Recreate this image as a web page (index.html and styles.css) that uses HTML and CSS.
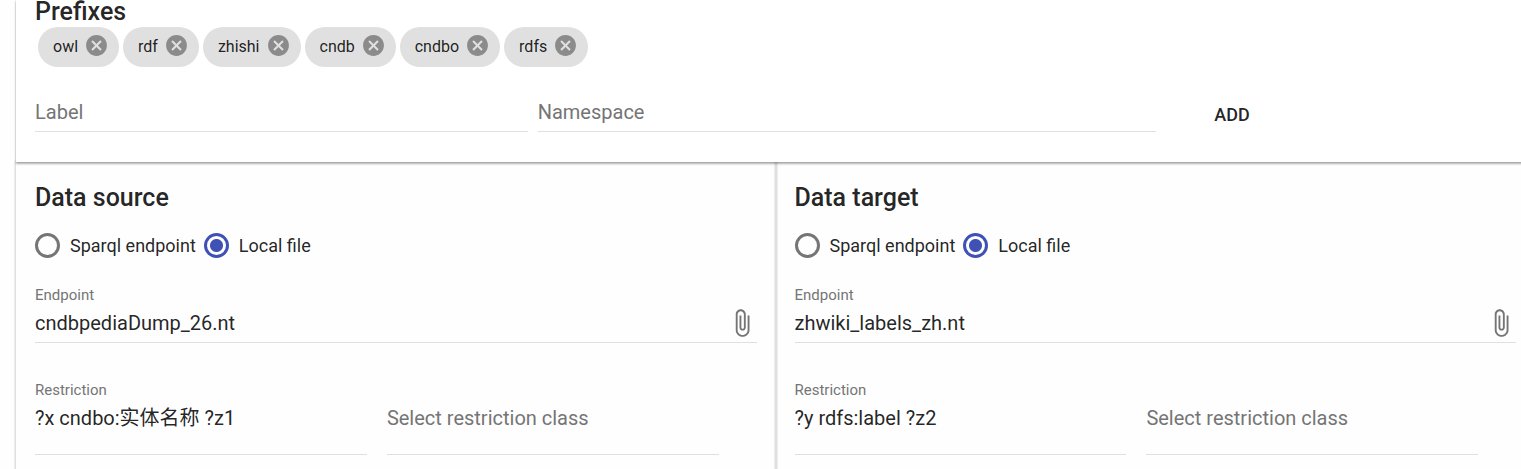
FILE: index.html
```
<!DOCTYPE html>
<html lang="en">
<head>
<meta charset="utf-8">
<title>Link configuration</title>
<link rel="stylesheet" href="styles.css">
</head>
<body>
<svg class="defs" aria-hidden="true">
  <symbol id="cancel" viewBox="0 0 24 24"><path d="M12 2C6.47 2 2 6.47 2 12s4.470 10 10 10 10-4.470 10-10S17.530 2 12 2zm5 13.590L15.590 17 12 13.410 8.410 17 7 15.590 10.590 12 7 8.410 8.410 7 12 10.590 15.590 7 17 8.410 13.410 12 17 15.590z"/></symbol>
  <symbol id="clip" viewBox="0 0 24 24"><path d="M16.500 6v11.500c0 2.210-1.790 4-4 4s-4-1.790-4-4V5c0-1.380 1.120-2.500 2.500-2.500s2.500 1.120 2.500 2.500v10.500c0 .550-.450 1-1 1s-1-.450-1-1V6H10v9.500c0 1.380 1.120 2.500 2.500 2.500s2.500-1.120 2.500-2.500V5c0-2.210-1.790-4-4-4S7 2.790 7 5v12.500c0 3.040 2.460 5.500 5.500 5.500s5.500-2.460 5.500-5.500V6h-1.500z"/></symbol>
</svg>
<main class="page">
  <section class="card prefixes">
    <h2 class="title">Prefixes</h2>
    <div class="chips">
      <span class="chip">owl<button class="remove" type="button" aria-label="Remove owl"><svg><use href="#cancel"/></svg></button></span>
      <span class="chip">rdf<button class="remove" type="button" aria-label="Remove rdf"><svg><use href="#cancel"/></svg></button></span>
      <span class="chip">zhishi<button class="remove" type="button" aria-label="Remove zhishi"><svg><use href="#cancel"/></svg></button></span>
      <span class="chip">cndb<button class="remove" type="button" aria-label="Remove cndb"><svg><use href="#cancel"/></svg></button></span>
      <span class="chip">cndbo<button class="remove" type="button" aria-label="Remove cndbo"><svg><use href="#cancel"/></svg></button></span>
      <span class="chip">rdfs<button class="remove" type="button" aria-label="Remove rdfs"><svg><use href="#cancel"/></svg></button></span>
    </div>
    <form class="add-form">
      <input class="text-input" type="text" placeholder="Label" aria-label="Label">
      <input class="text-input" type="text" placeholder="Namespace" aria-label="Namespace">
      <button class="add" type="button">ADD</button>
    </form>
  </section>
  <div class="columns">
    <section class="card dataset">
      <h2 class="title">Data source</h2>
      <div class="radios">
        <label class="option"><input class="radio" type="radio" name="source">Sparql endpoint</label>
        <label class="option"><input class="radio" type="radio" name="source" checked>Local file</label>
      </div>
      <div class="field">
        <label class="caption" for="source-endpoint">Endpoint</label>
        <div class="file-row">
          <input class="file-input" id="source-endpoint" type="text" value="cndbpediaDump_26.nt">
          <button class="attach" type="button" aria-label="Choose source file"><svg><use href="#clip"/></svg></button>
        </div>
      </div>
      <div class="restrictions">
        <div class="field">
          <label class="caption" for="source-restriction">Restriction</label>
          <textarea class="text-area" id="source-restriction">?x cndbo:实体名称 ?z1</textarea>
        </div>
        <textarea class="text-area" placeholder="Select restriction class" aria-label="Source restriction class"></textarea>
      </div>
    </section>
    <section class="card dataset">
      <h2 class="title">Data target</h2>
      <div class="radios">
        <label class="option"><input class="radio" type="radio" name="target">Sparql endpoint</label>
        <label class="option"><input class="radio" type="radio" name="target" checked>Local file</label>
      </div>
      <div class="field">
        <label class="caption" for="target-endpoint">Endpoint</label>
        <div class="file-row">
          <input class="file-input" id="target-endpoint" type="text" value="zhwiki_labels_zh.nt">
          <button class="attach" type="button" aria-label="Choose target file"><svg><use href="#clip"/></svg></button>
        </div>
      </div>
      <div class="restrictions">
        <div class="field">
          <label class="caption" for="target-restriction">Restriction</label>
          <textarea class="text-area" id="target-restriction">?y rdfs:label ?z2</textarea>
        </div>
        <textarea class="text-area" placeholder="Select restriction class" aria-label="Target restriction class"></textarea>
      </div>
    </section>
  </div>
</main>
</body>
</html>
```

FILE: styles.css
```
* { box-sizing: border-box; }
html { overflow: hidden; }
body {
  margin: 0;
  overflow: hidden;
  background: #fefefe;
  color: rgba(0, 0, 0, 0.87);
  font-family: Roboto, "Noto Sans CJK SC", sans-serif;
  font-size: 20px;
}
input, textarea, button { font: inherit; color: inherit; margin: 0; }
button { padding: 0; border: 0; background: none; cursor: pointer; }
svg { display: block; width: 100%; height: 100%; fill: currentColor; }
.defs { display: none; }

/* The cards run past the right edge of the window. */
.page { margin: 0 -14px 0 16px; }
.card {
  padding: 0 19px;
  box-shadow: 0 0 2px 1px rgba(0, 0, 0, 0.18);
}
.prefixes {
  position: relative;
  padding-bottom: 30px;
  background: #fff;
  box-shadow: 0 2px 2px rgba(0, 0, 0, 0.3), 0 0 2px rgba(0, 0, 0, 0.2);
}
.title { margin: 0; font-size: 25px; font-weight: 500; line-height: 28px; }
.prefixes .title { line-height: 24px; padding-bottom: 3px; }

.chips { display: flex; flex-wrap: wrap; gap: 4px; padding-left: 3px; }
.chip {
  display: flex;
  align-items: center;
  gap: 6px;
  height: 40px;
  padding: 0 10px 2px 15px;
  border-radius: 20px;
  background: #e0e0e0;
  font-size: 16px;
}
.remove { width: 25px; height: 25px; margin-bottom: 1px; color: #8b8b8b; }

.add-form {
  display: grid;
  grid-template-columns: 493fr 619fr 350fr;
  column-gap: 10px;
  margin-top: 30px;
}
.text-input, .text-area, .file-row {
  width: 100%;
  border: 0;
  border-bottom: 1px solid #e0e0e0;
  border-radius: 0;
  outline: 0;
  background: transparent;
}
.text-input { height: 35px; padding: 0 0 4px; }
::placeholder { color: #757575; opacity: 1; }
.add {
  justify-self: start;
  margin-left: 28px;
  padding: 0 20px;
  font-size: 18px;
  font-weight: 500;
}

.columns { display: grid; grid-template-columns: 1fr 1fr; }
.dataset { min-height: 320px; padding-top: 22px; }
.radios { display: flex; gap: 8px; margin-top: 21px; }
.option {
  display: flex;
  align-items: center;
  gap: 10px;
  height: 25px;
  font-size: 18px;
}
.radio {
  appearance: none;
  width: 25px;
  height: 25px;
  border: 3px solid #757575;
  border-radius: 50%;
}
.radio:checked {
  border-color: #3f51b5;
  background: radial-gradient(circle, #3f51b5 6px, transparent 7px);
}
.radios + .field { margin-top: 28px; }
.caption { display: block; color: #757575; font-size: 15px; line-height: 18px; }
.file-row { display: flex; align-items: center; height: 39px; }
.file-input {
  flex: 1;
  min-width: 0;
  height: 38px;
  padding: 0;
  border: 0;
  outline: 0;
  background: transparent;
}
.attach { width: 30px; height: 30px; color: #757575; }
.restrictions {
  display: grid;
  grid-template-columns: 46% 46%;
  column-gap: 20px;
  align-items: end;
  margin-top: 38px;
}
.text-area {
  display: block;
  height: 56px;
  padding: 7px 0 0;
  line-height: 25px;
  resize: none;
  overflow: hidden;
}
```
